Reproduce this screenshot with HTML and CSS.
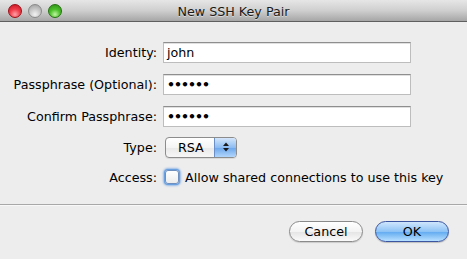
FILE: index.html
```html
<!DOCTYPE html>
<html>
<head>
<meta charset="utf-8">
<title>New SSH Key Pair</title>
<link rel="stylesheet" href="styles.css">
</head>
<body>
<div class="window">
  <div class="titlebar">
    <div class="lights">
      <span class="light red"></span>
      <span class="light gray"></span>
      <span class="light green"></span>
    </div>
    <div class="title">New SSH Key Pair</div>
  </div>
  <div class="content">
    <div class="row row-field">
      <div class="label">Identity:</div>
      <div class="field">john</div>
    </div>
    <div class="row row-field">
      <div class="label">Passphrase (Optional):</div>
      <div class="field dots">••••••</div>
    </div>
    <div class="row row-field">
      <div class="label">Confirm Passphrase:</div>
      <div class="field dots">••••••</div>
    </div>
    <div class="row row-popup">
      <div class="label">Type:</div>
      <div class="popup">
        <span class="popup-text">RSA</span>
        <span class="popup-arrows">
          <svg width="8" height="12" viewBox="0 0 8 12"><path d="M4 1.5 L7 5 L1 5 Z" fill="#1a1a1a"/><path d="M4 10.5 L7 7 L1 7 Z" fill="#1a1a1a"/></svg>
        </span>
      </div>
    </div>
    <div class="row row-check">
      <div class="label">Access:</div>
      <div class="check-wrap">
        <span class="checkbox"></span>
        <span class="check-label">Allow shared connections to use this key</span>
      </div>
    </div>
  </div>
  <div class="separator"></div>
  <div class="buttons">
    <div class="btn cancel">Cancel</div>
    <div class="btn ok">OK</div>
  </div>
</div>
</body>
</html>
```

FILE: styles.css
```css
html, body {
  margin: 0;
  padding: 0;
}
body {
  width: 467px;
  height: 259px;
  background: #ececec;
  font-family: "DejaVu Sans", "Noto Sans", sans-serif;
  font-size: 12.7px;
  color: #000;
  overflow: hidden;
}
.window {
  width: 467px;
  height: 259px;
  background: #ededed;
}
.titlebar {
  position: relative;
  height: 21px;
  background: linear-gradient(#e6e6e6, #cfcfcf 50%, #a6a6a6);
  border-bottom: 1px solid #5f5f5f;
  display: flex;
  align-items: center;
  justify-content: center;
}
.lights {
  position: absolute;
  left: 8px;
  top: 4px;
  display: flex;
  gap: 6px;
}
.light {
  width: 14px;
  height: 14px;
  border-radius: 50%;
  box-sizing: border-box;
}
.light.red {
  background: radial-gradient(circle at 50% 78%, #ffa0a6 0, #f0404c 45%, #c4101c 100%);
  border: 1px solid #9a1018;
}
.light.gray {
  background: radial-gradient(circle at 50% 78%, #f2f2f2 0, #c6c6c6 50%, #9a9a9a 100%);
  border: 1px solid #8a8a8a;
}
.light.green {
  background: radial-gradient(circle at 50% 78%, #bff4a0 0, #4cc02c 45%, #2c8a14 100%);
  border: 1px solid #237010;
}
.title {
  font-size: 12.7px;
  color: #1a1a1a;
  padding-top: 1px;
  text-shadow: 0 1px 0 rgba(255,255,255,0.5);
}
.content {
  padding-top: 20px;
  display: flex;
  flex-direction: column;
}
.row {
  display: grid;
  grid-template-columns: 157px auto;
  column-gap: 6px;
  align-items: center;
}
.row-field {
  height: 21px;
  margin-bottom: 11px;
}
.row-field:nth-child(3) {
  margin-bottom: 9px;
}
.label {
  text-align: right;
}
.field {
  width: 248px;
  height: 21px;
  box-sizing: border-box;
  background: #fff;
  border: 1px solid #bdbdbd;
  border-top-color: #8e8e8e;
  box-shadow: inset 0 1px 0 #e0e0e0;
  padding: 0 0 0 3px;
  line-height: 20px;
}
.field.dots {
  font-size: 12.5px;
  letter-spacing: -1px;
  font-weight: bold;
  line-height: 19px;
}
.row-popup {
  height: 22px;
}
.popup {
  margin-left: 2px;
  width: 72px;
  height: 21px;
  box-sizing: border-box;
  border: 1px solid #8c8c8c;
  border-radius: 4px;
  display: flex;
  overflow: hidden;
  background: linear-gradient(#ffffff, #f4f4f4 50%, #e8e8e8 51%, #f6f6f6);
  box-shadow: 0 1px 0 rgba(0,0,0,0.08);
}
.popup-text {
  flex: 1;
  padding-left: 12px;
  line-height: 19px;
}
.popup-arrows {
  width: 21px;
  border-left: 1px solid #6b8fc8;
  background: linear-gradient(#d4e6fb, #8dbcf2 50%, #6aa5ec 51%, #b2d6fb);
  display: flex;
  align-items: center;
  justify-content: center;
}
.row-check {
  margin-top: 11px;
  height: 16px;
}
.check-wrap {
  margin-left: 2px;
  display: flex;
  align-items: center;
  gap: 6px;
}
.checkbox {
  width: 14px;
  height: 14px;
  box-sizing: border-box;
  border: 1px solid #6f8fbf;
  border-radius: 3px;
  background: linear-gradient(#ffffff, #ececec);
  box-shadow: 0 0 0 1px #6aa0e0, 0 0 2px 2px rgba(90,150,225,0.6);
}
.separator {
  margin-top: 19px;
  height: 1px;
  background: #a8a8a8;
  border-bottom: 1px solid #f8f8f8;
}
.buttons {
  display: flex;
  justify-content: flex-end;
  gap: 12px;
  padding: 15px 18px 0 0;
}
.btn {
  width: 74px;
  height: 21px;
  box-sizing: border-box;
  border-radius: 11px;
  text-align: center;
  line-height: 19px;
}
.btn.cancel {
  border: 1px solid #8a8a8a;
  background: linear-gradient(#ffffff, #f3f3f3 50%, #e4e4e4 51%, #fafafa);
  box-shadow: 0 1px 1px rgba(0,0,0,0.15);
}
.btn.ok {
  border: 1px solid #3c55a0;
  background: linear-gradient(#cfe6fd, #8ec3f6 50%, #5fa9f0 51%, #b8e0ff);
  box-shadow: 0 1px 1px rgba(0,0,0,0.2);
}
```
